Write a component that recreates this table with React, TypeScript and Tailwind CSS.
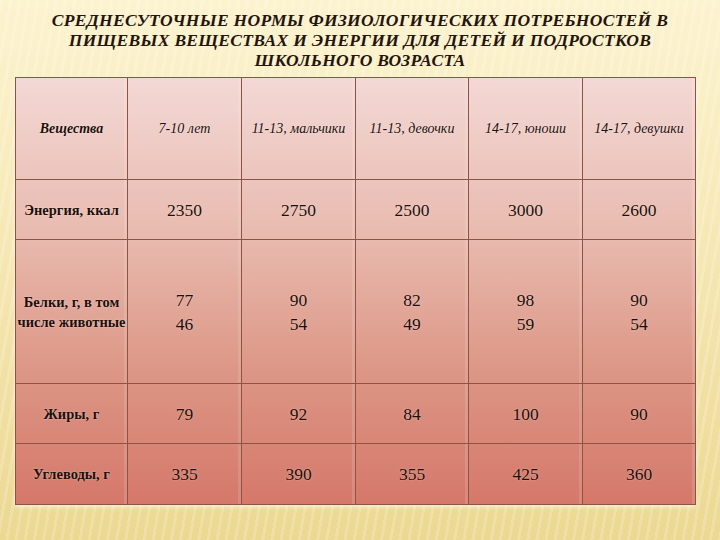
const headers = ["Вещества", "7-10 лет", "11-13, мальчики", "11-13, девочки", "14-17, юноши", "14-17, девушки"]

interface Row {
  label: string[]
  values: string[][]
  height: string
}

const rows: Row[] = [
  { label: ["Энергия, ккал"], values: [["2350"], ["2750"], ["2500"], ["3000"], ["2600"]], height: "h-[60px]" },
  {
    label: ["Белки, г, в том", "числе животные"],
    values: [["77", "46"], ["90", "54"], ["82", "49"], ["98", "59"], ["90", "54"]],
    height: "h-[144px]",
  },
  { label: ["Жиры, г"], values: [["79"], ["92"], ["84"], ["100"], ["90"]], height: "h-[60px]" },
  { label: ["Углеводы, г"], values: [["335"], ["390"], ["355"], ["425"], ["360"]], height: "h-[61px]" },
]

const colW = ["w-[112px]", "w-[114px]", "w-[114px]", "w-[113px]", "w-[114px]", "w-[113px]"]

export default function App() {
  return (
    <div className="w-[720px] h-[540px] overflow-hidden bg-[linear-gradient(180deg,#fcf3cf_0%,#f7e9b8_40%,#ecd891_100%)] text-[#1e0e08] [font-family:Liberation_Serif,serif]">
      <div className="w-full h-full bg-[repeating-linear-gradient(100deg,rgba(255,255,255,0.18)_0px,rgba(255,255,255,0.18)_3px,rgba(0,0,0,0)_3px,rgba(0,0,0,0)_9px)] pt-[10px]">
        <h1 className="[font-family:Liberation_Serif,serif] text-center italic font-bold text-[17.5px] leading-[20px] tracking-[0.3px] text-[#24140c]">
          СРЕДНЕСУТОЧНЫЕ НОРМЫ ФИЗИОЛОГИЧЕСКИХ ПОТРЕБНОСТЕЙ В
          <br />
          ПИЩЕВЫХ ВЕЩЕСТВАХ И ЭНЕРГИИ ДЛЯ ДЕТЕЙ И ПОДРОСТКОВ
          <br />
          ШКОЛЬНОГО ВОЗРАСТА
        </h1>

        <div className="ml-[15px] mt-[7px] w-[681px] border-l border-t border-[#8d5343] bg-[linear-gradient(180deg,#f3d8d5_0%,#e9bcb1_35%,#dc9584_70%,#d5786a_100%)] shadow-[0_2px_4px_rgba(255,255,255,0.6)]">
          <div className="flex h-[102px]">
            {headers.map((h, i) => (
              <div
                key={h}
                className={`${colW[i]} flex items-center justify-center border-r border-b border-[#8d5343] shadow-[inset_-3px_0_0_rgba(255,255,255,0.12)]`}
              >
                <span
                  className={`[font-family:Liberation_Serif,serif] italic text-[14px] whitespace-nowrap ${i === 0 ? "font-bold" : ""} [text-shadow:0_0_2px_rgba(255,255,255,0.6)]`}
                >
                  {h}
                </span>
              </div>
            ))}
          </div>
          {rows.map((r) => (
            <div key={r.label[0]} className={`flex ${r.height}`}>
              <div
                className={`${colW[0]} flex flex-col items-center justify-center border-r border-b border-[#8d5343] shadow-[inset_-3px_0_0_rgba(255,255,255,0.12)]`}
              >
                {r.label.map((l) => (
                  <span
                    key={l}
                    className="[font-family:Liberation_Serif,serif] font-bold text-[14.5px] leading-[20px] whitespace-nowrap [text-shadow:0_0_2px_rgba(255,255,255,0.5)]"
                  >
                    {l}
                  </span>
                ))}
              </div>
              {r.values.map((v, i) => (
                <div
                  key={i}
                  className={`${colW[i + 1]} flex flex-col items-center justify-center border-r border-b border-[#8d5343] shadow-[inset_-3px_0_0_rgba(255,255,255,0.12)]`}
                >
                  {v.map((n, j) => (
                    <span
                      key={j}
                      className="[font-family:Liberation_Serif,serif] text-[17.5px] leading-[24px] [text-shadow:0_0_2px_rgba(255,255,255,0.45)]"
                    >
                      {n}
                    </span>
                  ))}
                </div>
              ))}
            </div>
          ))}
        </div>
      </div>
    </div>
  )
}
